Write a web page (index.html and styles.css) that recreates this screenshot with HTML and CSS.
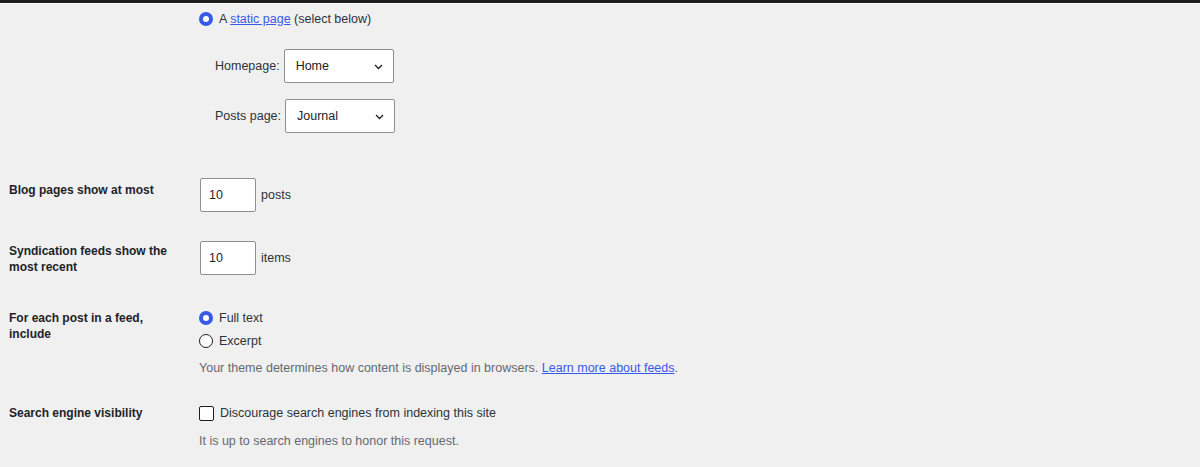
FILE: index.html
```html
<!DOCTYPE html>
<html lang="en">
<head>
<meta charset="utf-8">
<title>Reading Settings</title>
<link rel="stylesheet" href="styles.css">
</head>
<body>
<div class="topbar"></div>
<main class="settings">
  <section class="row row-front">
    <div class="label"></div>
    <div class="field">
      <label class="choice">
        <input type="radio" name="front" class="radio" checked>
        <span>A <a href="#">static page</a> (select below)</span>
      </label>
      <div class="page-select first">
        <span class="sel-label">Homepage:</span>
        <span class="select-wrap">
          <select class="select"><option>Home</option></select>
          <svg class="chev" width="9" height="6" viewBox="0 0 9 6"><path d="M1 1l3.5 3.5L8 1" fill="none" stroke="#1e1e1e" stroke-width="1.3"/></svg>
        </span>
      </div>
      <div class="page-select">
        <span class="sel-label">Posts page:</span>
        <span class="select-wrap">
          <select class="select"><option>Journal</option></select>
          <svg class="chev" width="9" height="6" viewBox="0 0 9 6"><path d="M1 1l3.5 3.5L8 1" fill="none" stroke="#1e1e1e" stroke-width="1.3"/></svg>
        </span>
      </div>
    </div>
  </section>

  <section class="row row-blog">
    <div class="label">Blog pages show at most</div>
    <div class="field inline">
      <input class="num" type="text" value="10">
      <span>posts</span>
    </div>
  </section>

  <section class="row row-feeds">
    <div class="label">Syndication feeds show the most recent</div>
    <div class="field inline">
      <input class="num" type="text" value="10">
      <span>items</span>
    </div>
  </section>

  <section class="row row-include">
    <div class="label">For each post in a feed, include</div>
    <div class="field">
      <label class="choice">
        <input type="radio" name="feed" class="radio" checked>
        <span>Full text</span>
      </label>
      <label class="choice second">
        <input type="radio" name="feed" class="radio">
        <span>Excerpt</span>
      </label>
      <p class="desc desc-feeds">Your theme determines how content is displayed in browsers. <a href="#">Learn more about feeds</a>.</p>
    </div>
  </section>

  <section class="row row-search">
    <div class="label">Search engine visibility</div>
    <div class="field">
      <label class="choice">
        <input type="checkbox" class="check">
        <span>Discourage search engines from indexing this site</span>
      </label>
      <p class="desc desc-search">It is up to search engines to honor this request.</p>
    </div>
  </section>
</main>
</body>
</html>
```

FILE: styles.css
```css
* { box-sizing: border-box; }

html, body {
  margin: 0;
  padding: 0;
  background: #f0f0f1;
}

body {
  font-family: "Liberation Sans", Arial, sans-serif;
  font-size: 12.5px;
  line-height: 16px;
  color: #1d2327;
}

.topbar {
  height: 4px;
  background: #1d1d1d;
  border-bottom: 1px solid #fbfbfb;
}

.settings {
  padding-left: 9px;
}

.row {
  display: flex;
  align-items: flex-start;
}

.label {
  width: 190px;
  flex: none;
  padding-right: 18px;
  font-size: 12px;
  font-weight: bold;
  color: #1d2327;
}

.field {
  flex: 1;
  min-width: 0;
}

a {
  color: #3858e9;
  text-decoration: underline;
}

.choice {
  display: flex;
  align-items: center;
  gap: 6px;
  height: 16px;
  color: #2c3338;
}

.radio {
  appearance: none;
  -webkit-appearance: none;
  margin: 0;
  width: 14px;
  height: 14px;
  border-radius: 50%;
  border: 1.5px solid #1e1e1e;
  background: #fff;
  flex: none;
}

.radio:checked {
  border: 4px solid #3858e9;
}

.check {
  appearance: none;
  -webkit-appearance: none;
  margin: 0;
  width: 15px;
  height: 15px;
  border: 1.5px solid #1e1e1e;
  border-radius: 2px;
  background: #fff;
  flex: none;
}

/* Row 1: front page */
.row-front {
  padding-top: 7px;
}

.page-select {
  display: flex;
  align-items: center;
  gap: 4px;
  margin-left: 16px;
  margin-top: 16px;
}

.page-select.first {
  margin-top: 22px;
}

.sel-label {
  color: #2c3338;
}

.select-wrap {
  position: relative;
  display: inline-block;
}

.select {
  appearance: none;
  -webkit-appearance: none;
  width: 110px;
  height: 34px;
  margin: 0;
  padding: 0 24px 0 11px;
  border: 1px solid #8c8f94;
  border-radius: 2px;
  background: #fff;
  font-family: "Liberation Sans", Arial, sans-serif;
  font-size: 12.5px;
  color: #1d2327;
}

.chev {
  position: absolute;
  right: 11px;
  top: 15px;
  pointer-events: none;
}

/* Number rows */
.inline {
  display: flex;
  align-items: center;
  gap: 5px;
  color: #2c3338;
}

.num {
  width: 56px;
  height: 34px;
  margin: 0 0 0 1px;
  padding: 0 8px;
  border: 1px solid #8c8f94;
  border-radius: 2px;
  background: #fff;
  font-family: "Liberation Sans", Arial, sans-serif;
  font-size: 12.5px;
  color: #1d2327;
}

.row-blog {
  padding-top: 45px;
}

.row-blog .label {
  padding-top: 4px;
}

.row-feeds {
  padding-top: 29px;
}

.row-feeds .label {
  padding-top: 2px;
}

/* Feed include */
.row-include {
  padding-top: 35px;
}

.choice.second {
  margin-top: 7px;
}

.desc {
  margin: 0;
  color: #646970;
}

.desc-feeds {
  margin-top: 11px;
}

/* Search engine */
.row-search {
  padding-top: 29px;
}

.desc-search {
  margin-top: 12px;
}
```
